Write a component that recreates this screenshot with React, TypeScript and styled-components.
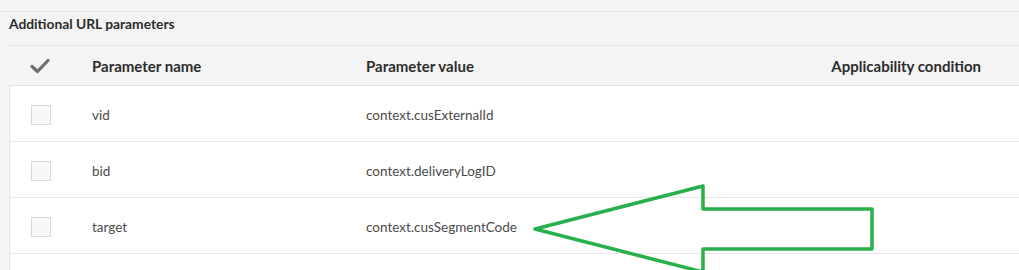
import styled, { createGlobalStyle } from "styled-components";

const GlobalStyle = createGlobalStyle`
  html, body {
    margin: 0;
    padding: 0;
    background: #f4f4f4;
    overflow: hidden;
  }
  body {
    font-family: "Lato", "Open Sans", sans-serif;
    color: #4b4b4b;
  }
`;

const rows = [
  { name: "vid", value: "context.cusExternalId" },
  { name: "bid", value: "context.deliveryLogID" },
  { name: "target", value: "context.cusSegmentCode" },
  { name: "", value: "" },
];

const Page = styled.div`
  position: relative;
  width: 1019px;
  height: 270px;
  overflow: hidden;
  padding-top: 11px;
  box-sizing: border-box;
`;

const Section = styled.section`
  border-top: 1px solid #e3e3e3;
  padding-left: 9px;
`;

const Title = styled.h3`
  margin: 0;
  height: 34px;
  line-height: 22px;
  font-size: 13.8px;
  font-weight: 700;
  color: #2c2c2c;
  border-bottom: 1px solid #e3e3e3;
  box-sizing: border-box;
  padding-top: 1px;
`;

const Grid = styled.div`
  display: grid;
  grid-template-columns: 83px 274px 465px 1fr;
`;

const Row = styled.div`
  display: contents;
`;

const HeadCell = styled.div<{ $right?: boolean }>`
  height: 40px;
  display: flex;
  align-items: center;
  font-size: 15px;
  font-weight: 700;
  color: #2c2c2c;
  border-bottom: 1px solid #e3e3e3;
  box-sizing: border-box;
  justify-content: ${(p) => (p.$right ? "flex-end" : "flex-start")};
  padding-right: ${(p) => (p.$right ? "38px" : "0")};
`;

const CheckHead = styled(HeadCell)`
  padding-left: 21px;
`;

const BodyCell = styled.div<{ $first?: boolean }>`
  height: 56px;
  display: flex;
  align-items: center;
  font-size: 13.5px;
  color: #4b4b4b;
  background: #fff;
  border-bottom: 1px solid #e6e6e6;
  box-sizing: border-box;
  padding-top: 3px;
  padding-left: ${(p) => (p.$first ? "21px" : "0")};
  border-left: ${(p) => (p.$first ? "1px solid #e6e6e6" : "none")};
`;

const Box = styled.span`
  width: 18px;
  height: 18px;
  border: 1px solid #d8d8d8;
  background: #f8f8f8;
  box-sizing: content-box;
`;

const Arrow = styled.svg`
  position: absolute;
  left: 0;
  top: 0;
  pointer-events: none;
`;

function CheckMark() {
  return (
    <svg width="20" height="16" viewBox="0 0 20 16">
      <path d="M2 8.5 L7.5 13.5 L18 2.5" fill="none" stroke="#6e6e6e" strokeWidth="3.2" strokeLinecap="round" strokeLinejoin="round" />
    </svg>
  );
}

export default function App() {
  return (
    <Page>
      <GlobalStyle />
      <Section>
        <Title>Additional URL parameters</Title>
        <Grid>
          <Row>
            <CheckHead>
              <CheckMark />
            </CheckHead>
            <HeadCell>Parameter name</HeadCell>
            <HeadCell>Parameter value</HeadCell>
            <HeadCell $right>Applicability condition</HeadCell>
          </Row>
          {rows.map((r, i) => (
            <Row key={i}>
              <BodyCell $first>{r.name && <Box />}</BodyCell>
              <BodyCell>{r.name}</BodyCell>
              <BodyCell>{r.value}</BodyCell>
              <BodyCell />
            </Row>
          ))}
        </Grid>
      </Section>
      <Arrow width="1019" height="270" viewBox="0 0 1019 270">
        <polygon
          points="535,229 703,186 703,209 872,209 872,249 703,249 703,272"
          fill="none"
          stroke="#27b04b"
          strokeWidth="3.5"
          strokeLinejoin="round"
        />
      </Arrow>
    </Page>
  );
}
